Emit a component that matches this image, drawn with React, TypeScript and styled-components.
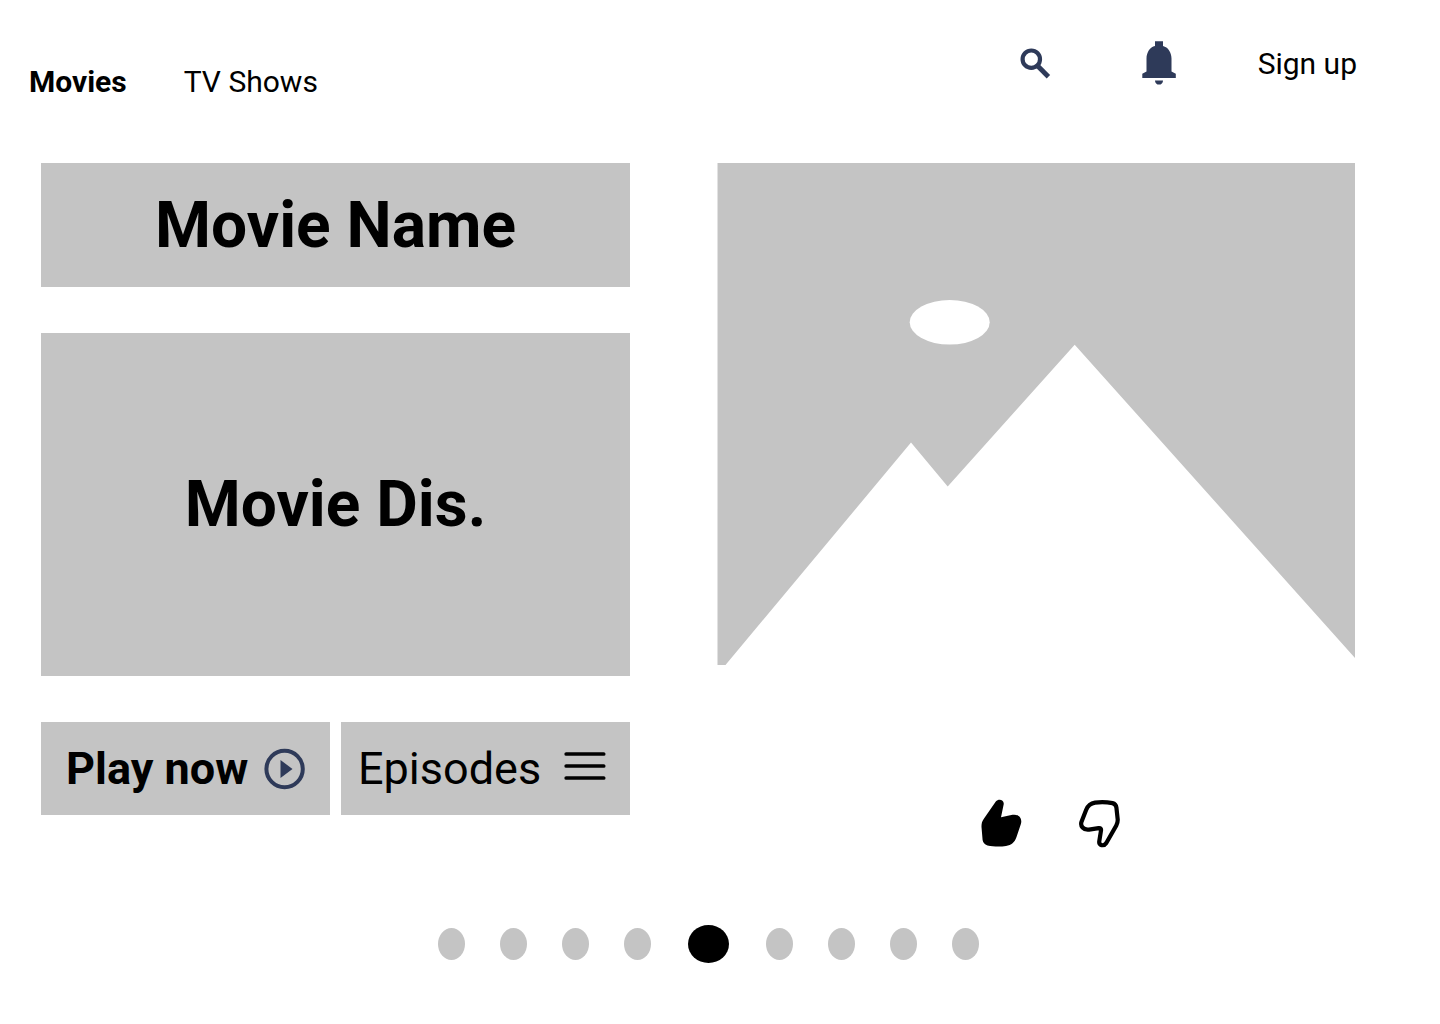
import React, { useState } from "react";
import styled, { createGlobalStyle } from "styled-components";

const GREY = "#c4c4c4";
const NAVY = "#2e3a59";

const GlobalStyle = createGlobalStyle`
  *, *::before, *::after { box-sizing: border-box; }
  body {
    margin: 0;
    background: #fff;
    color: #000;
    font-family: Roboto, "Liberation Sans", sans-serif;
  }
  h1, p { margin: 0; }
  button { font: inherit; color: inherit; border: 0; padding: 0; background: none; cursor: pointer; }
  a { color: inherit; text-decoration: none; }
  svg { display: block; }
`;

const Page = styled.div`
  padding-bottom: 60px;
`;

const Header = styled.header`
  display: flex;
  justify-content: space-between;
  align-items: flex-start;
  padding: 40px 83px 0 29px;
  min-height: 163px;
`;

const Nav = styled.nav`
  display: flex;
  gap: 57px;
  padding-top: 24px;
`;

const NavLink = styled.a<{ $current?: boolean }>`
  font-size: 30px;
  line-height: 36px;
  font-weight: ${(p) => (p.$current ? 700 : 400)};
`;

const Actions = styled.div`
  display: flex;
  align-items: center;
  color: ${NAVY};
`;

const SearchButton = styled.button`
  margin-right: 90px;
`;

const BellButton = styled.button`
  margin-right: 82px;
`;

const SignUp = styled.a`
  font-size: 30px;
  line-height: 48px;
  color: #000;
`;

const Main = styled.main`
  display: grid;
  grid-template-columns: 589fr 638fr;
  column-gap: 87px;
  padding: 0 85px 0 41px;
`;

const Details = styled.section`
  display: flex;
  flex-direction: column;
  gap: 46px;
`;

const Panel = styled.div<{ $height: number }>`
  display: flex;
  align-items: center;
  justify-content: center;
  min-height: ${(p) => p.$height}px;
  background: ${GREY};
  font-size: 64px;
  line-height: 75px;
  font-weight: 700;
`;

const PanelTitle = styled.h1`
  font-size: inherit;
`;

const ButtonRow = styled.div`
  display: grid;
  grid-template-columns: 1fr 1fr;
  gap: 11px;
`;

const ActionButton = styled.button<{ $primary?: boolean }>`
  && {
    display: flex;
    align-items: center;
    justify-content: space-between;
    min-height: 93px;
    padding: 0 24px 0 ${(p) => (p.$primary ? 25 : 17)}px;
    background: ${GREY};
    font-size: 45px;
    line-height: 53px;
    font-weight: ${(p) => (p.$primary ? 700 : 400)};
  }
`;

const MenuIcon = styled.svg`
  margin-bottom: 6px;
`;

const Preview = styled.section`
  display: flex;
  flex-direction: column;
`;

const Artwork = styled.svg`
  width: 100%;
  height: auto;
`;

const Rating = styled.div`
  display: flex;
  justify-content: center;
  gap: 57px;
  padding: 134px 0 0 28px;
`;

const Dots = styled.div`
  display: flex;
  align-items: center;
  justify-content: center;
  gap: 35px;
  padding: 77px 23px 0 0;
`;

const Dot = styled.button<{ $active: boolean }>`
  && {
    width: ${(p) => (p.$active ? 41 : 27)}px;
    height: ${(p) => (p.$active ? 38 : 32)}px;
    margin: 0 ${(p) => (p.$active ? 2 : 0)}px;
    border-radius: 50%;
    background: ${(p) => (p.$active ? "#000" : GREY)};
  }
`;

const slides = [0, 1, 2, 3, 4, 5, 6, 7, 8];

export default function App() {
  const [active, setActive] = useState(4);

  return (
    <>
      <GlobalStyle />
      <Page>
        <Header>
          <Nav>
            <NavLink href="#movies" $current>Movies</NavLink>
            <NavLink href="#tv">TV Shows</NavLink>
          </Nav>
          <Actions>
            <SearchButton aria-label="Search">
              <svg width="32" height="32" viewBox="0 0 32 32" fill="none" stroke="currentColor">
                <circle cx="11.3" cy="11.2" r="8.7" strokeWidth="4.2" />
                <path d="M17 17.2 28.4 28.8" strokeWidth="4.8" />
              </svg>
            </SearchButton>
            <BellButton aria-label="Notifications">
              <svg width="34" height="46" viewBox="0 0 34 46" fill="currentColor">
                <path d="M13 .3h8v4.6c5 1.2 8.500 6.300 8.500 12.600v13l4.300 2.300v4.200H.3v-4.200l4.200-2.300v-13C4.500 11.200 8 6 13 4.900z" />
                <path d="M13 39.400h8c0 2.500-1.800 4.200-4 4.200s-4-1.700-4-4.200z" />
              </svg>
            </BellButton>
            <SignUp href="#signup">Sign up</SignUp>
          </Actions>
        </Header>

        <Main>
          <Details>
            <Panel $height={124}>
              <PanelTitle>Movie Name</PanelTitle>
            </Panel>
            <Panel $height={343}>
              <p>Movie Dis.</p>
            </Panel>
            <ButtonRow>
              <ActionButton $primary>
                Play now
                <svg width="42" height="42" viewBox="0 0 42 42" fill="none">
                  <circle cx="20.6" cy="21" r="18.2" stroke={NAVY} strokeWidth="4" />
                  <path d="M16.500 12v18l12-9z" fill={NAVY} />
                </svg>
              </ActionButton>
              <ActionButton>
                Episodes
                <MenuIcon width="42" height="28" viewBox="0 0 42 28" fill="none" stroke="#000" strokeWidth="3.7" strokeLinecap="round">
                  <path d="M2.200 2h37.500M2.200 14h37.500M2.200 26h37.500" />
                </MenuIcon>
              </ActionButton>
            </ButtonRow>
          </Details>

          <Preview>
            <Artwork viewBox="0 0 638 502" role="img" aria-label="Movie artwork">
              <path d="M.5 0H638V495L357.700 181.700 230.700 323.500 194 279.600 8.500 502H.5z" fill={GREY} />
              <ellipse cx="232.700" cy="159.300" rx="40" ry="22.300" fill="#fff" />
            </Artwork>
            <Rating>
              <button aria-label="Like">
                <svg width="41" height="49" viewBox="0 0 41 49">
                  <path d="M14.800 2.600C17.500-.8 23.300.8 22.700 5.200L20 18.200 31.500 15.800C37.500 14.700 41.800 19.600 39.800 25.200L35.500 38C33.500 43.600 30.500 46 25 47 18.500 48 12 47.600 6.500 46.400 3.500 45.700 2 43.500 1.600 41L.5 28C.4 24.600 1 22.500 2.700 20.100z" />
                </svg>
              </button>
              <button aria-label="Dislike">
                <svg width="41" height="49" viewBox="0 0 41 49" fill="none" stroke="#000" strokeWidth="4.2" strokeLinejoin="round">
                  <path d="M20.300 42.200 22 31.500C22.300 29.600 21.400 28.800 19.600 29.100L10 30.600C4.500 31.300.9 27 2.600 22.500L7.200 10.800C9 6.300 11.500 4.300 16 3.600 22 2.700 28 3 33.500 4.100 36 4.700 37.100 6 37.400 8.500L38.700 20.500C38.800 23 38.500 24.300 37.300 26.500L27.300 44C24.700 47.800 19.600 46.400 20.300 42.200z" />
                </svg>
              </button>
            </Rating>
          </Preview>
        </Main>

        <Dots>
          {slides.map((n) => (
            <Dot key={n} $active={n === active} aria-label={`Slide ${n + 1}`} onClick={() => setActive(n)} />
          ))}
        </Dots>
      </Page>
    </>
  );
}
